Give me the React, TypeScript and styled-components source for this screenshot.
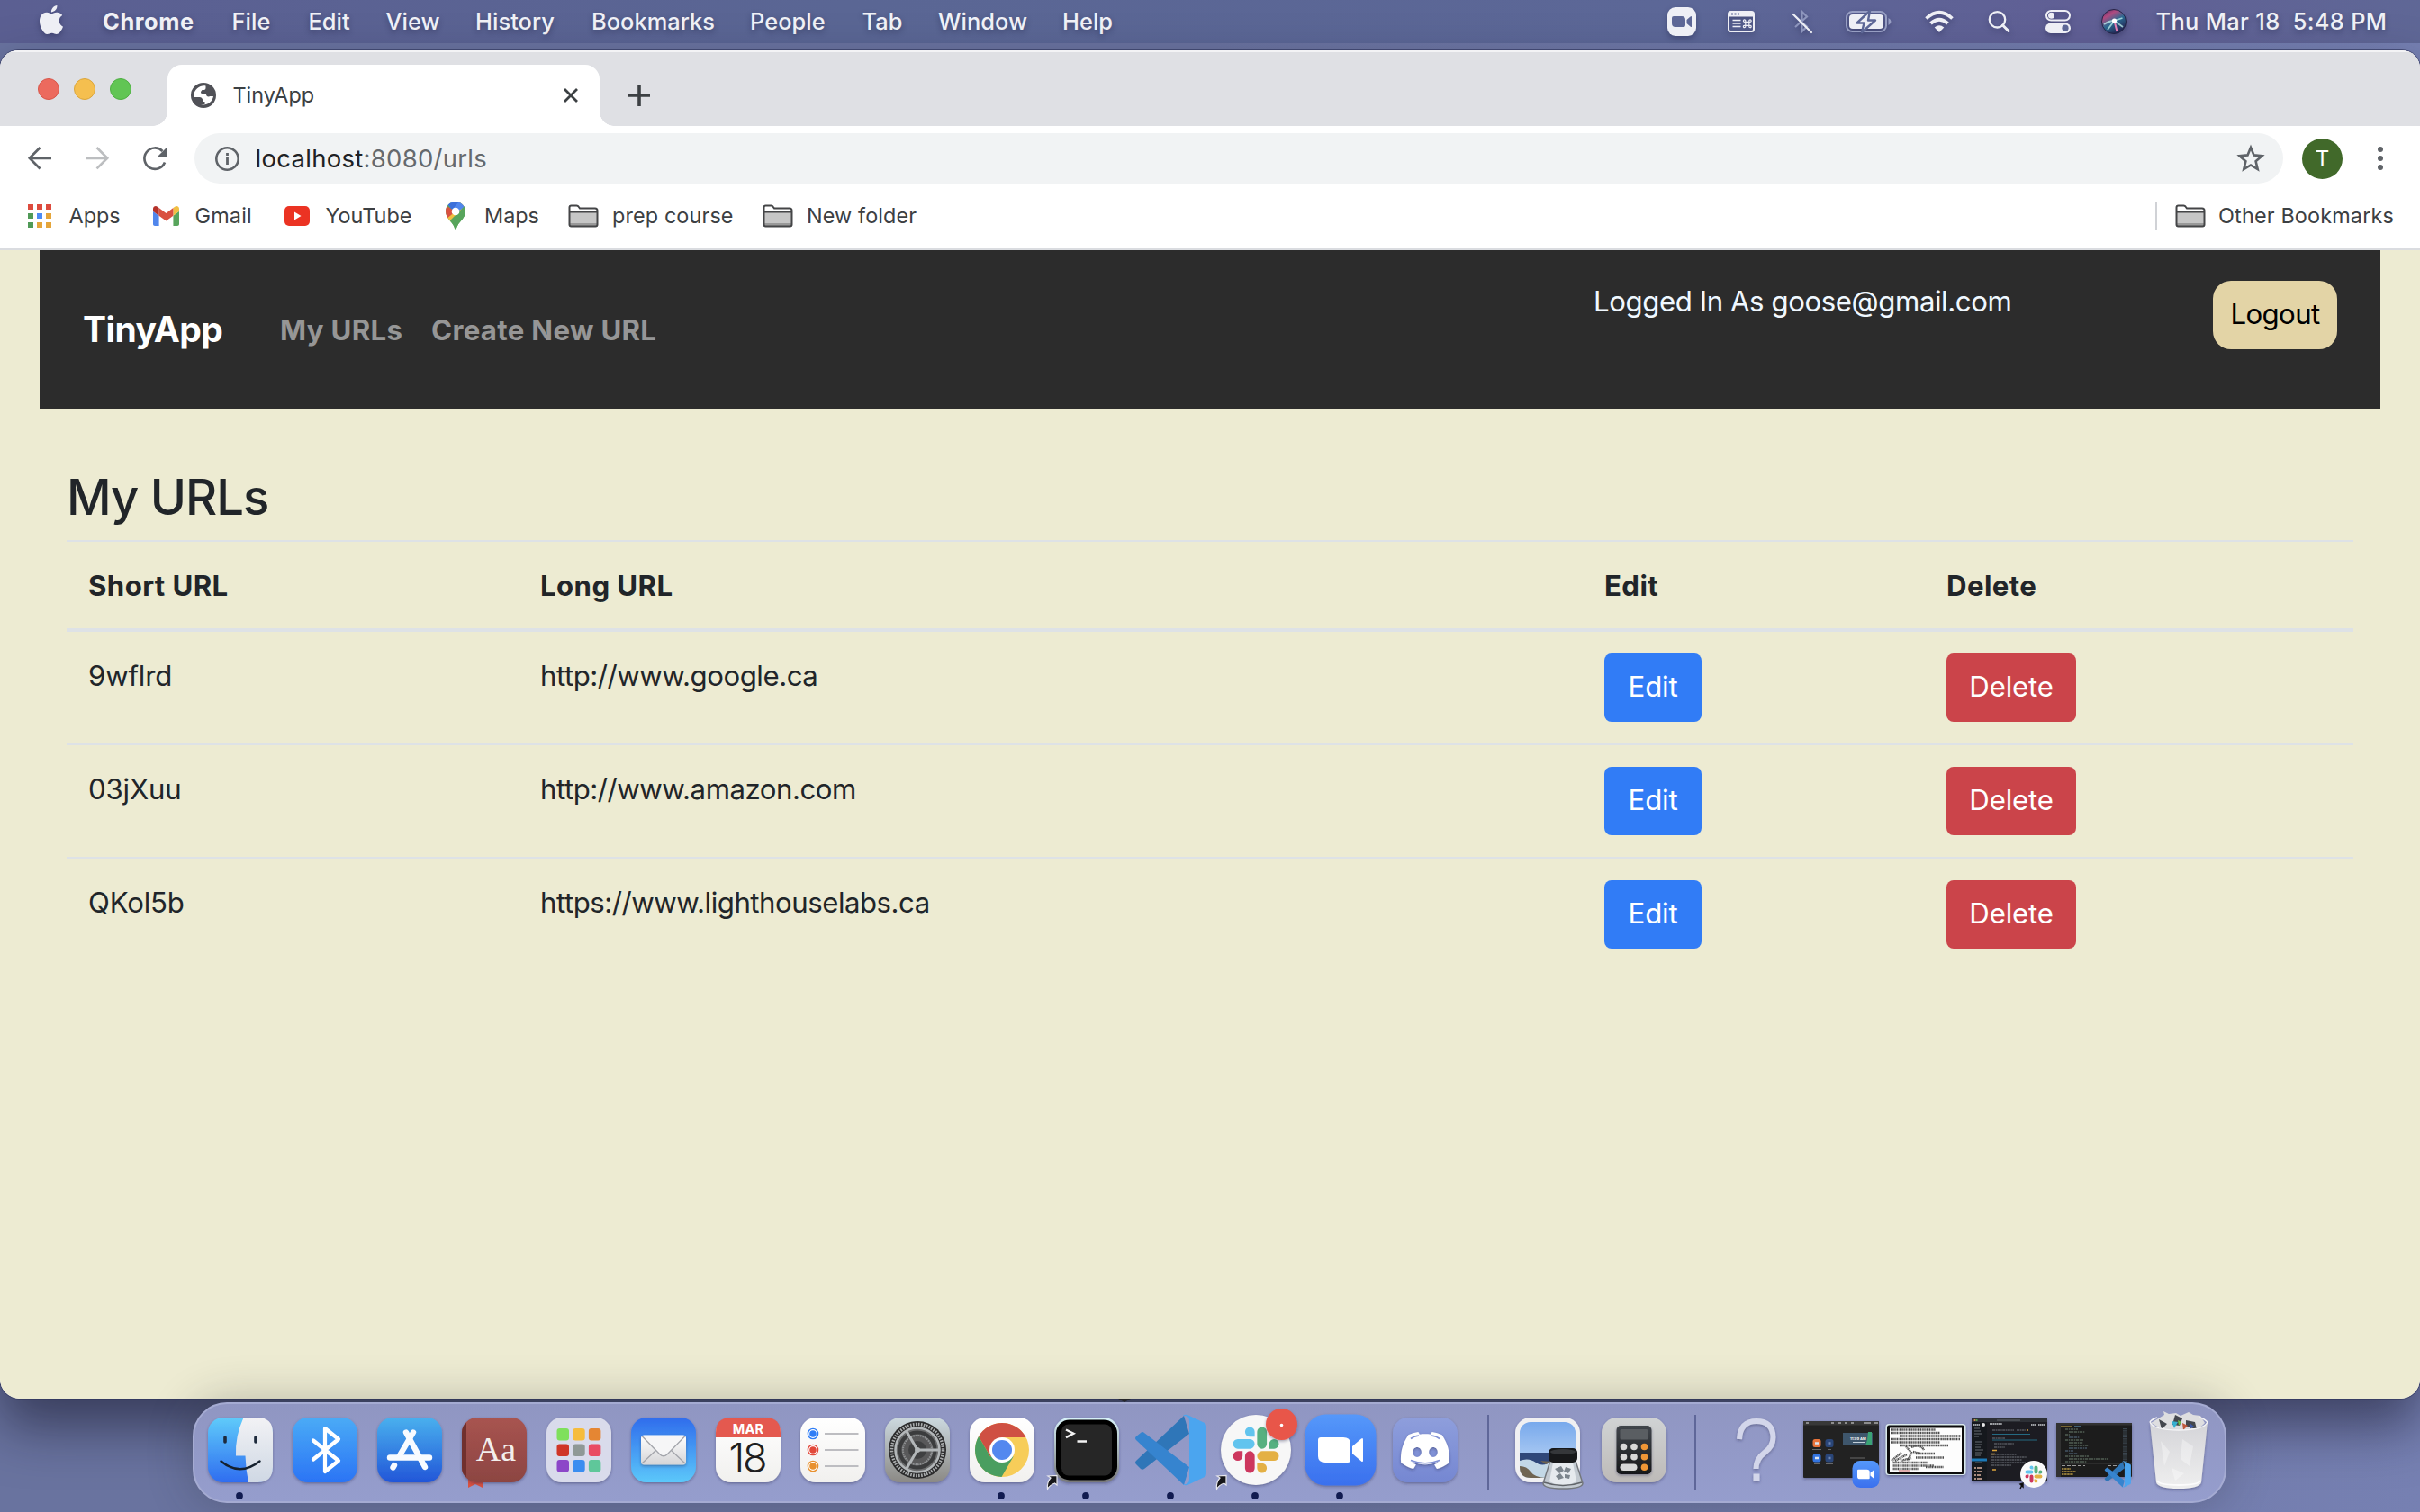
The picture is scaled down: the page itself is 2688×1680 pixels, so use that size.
import React from "react";
import styled, { createGlobalStyle } from "styled-components";
import { SiApple, SiDiscord } from "react-icons/si";

const GlobalStyle = createGlobalStyle`
  *, *::before, *::after { box-sizing: border-box; }
  html, body { margin: 0; padding: 0; }
  body {
    font-family: Inter, "Liberation Sans", sans-serif;
    -webkit-font-smoothing: antialiased;
    overflow: hidden;
  }
  svg { display: block; flex: none; overflow: visible; }
`;

/* ---------- desktop ---------- */

const Desktop = styled.div`
  width: 2688px;
  height: 1680px;
  display: flex;
  flex-direction: column;
  overflow: hidden;
  background: linear-gradient(90deg, #69739f 0%, #6a739f 50%, #7680b2 100%);
`;

const MenuBar = styled.header`
  height: 48px;
  flex: none;
  display: flex;
  align-items: center;
  color: #f1f2f7;
  font-size: 25.4px;
  line-height: 48px;
  white-space: pre;
  padding: 0 0 0 41px;
  background: linear-gradient(90deg, #5b5f92 0%, #5a6694 35%, #5c6797 70%, #605f95 86%, #5f6796 100%);
  text-shadow: 0 3px 6px rgba(20, 24, 60, 0.4);

  svg { filter: drop-shadow(0 3px 3px rgba(20, 24, 60, 0.35)); }
`;

const AppleSlot = styled.div`
  width: 73px;
  height: 48px;
  padding-top: 6px;
`;

const MenuItem = styled.span<{ $width: number; $bold?: boolean }>`
  width: ${(p) => p.$width}px;
  flex: none;
  font-weight: ${(p) => (p.$bold ? 700 : 500)};
  letter-spacing: ${(p) => (p.$bold ? 0.6 : 0.05)}px;
`;

const StatusItems = styled.div`
  display: flex;
  align-items: center;
  margin-left: 611.5px;
`;

const StatusSlot = styled.div<{ $gap?: number }>`
  margin-left: ${(p) => p.$gap ?? 0}px;
`;

const Clock = styled.span`
  margin-left: 33px;
  font-weight: 500;
  line-height: 46px;
  letter-spacing: 0.34px;
`;

/* ---------- browser window ---------- */

const Window = styled.main`
  margin-top: 8px;
  height: 1498px;
  flex: none;
  display: flex;
  flex-direction: column;
  border-radius: 20px 20px 22px 22px;
  overflow: hidden;
  background: #fff;
  box-shadow: 0 0 0 1px rgba(50, 55, 95, 0.7), 0 30px 60px rgba(15, 15, 35, 0.55);
`;

const TabStrip = styled.div`
  height: 84px;
  flex: none;
  display: flex;
  align-items: flex-end;
  padding-left: 42px;
  background: #dfe0e4;
  box-shadow: inset 0 2px 0 #f3f3f5;
`;

const Lights = styled.div`
  display: flex;
  gap: 16px;
  width: 144px;
  height: 53px;
`;

const Light = styled.i<{ $color: string; $edge: string }>`
  width: 24px;
  height: 24px;
  border-radius: 50%;
  background: ${(p) => p.$color};
  border: 1px solid ${(p) => p.$edge};
`;

const Tab = styled.div`
  position: relative;
  width: 480px;
  height: 68px;
  display: flex;
  align-items: center;
  padding: 0 24px 0 26px;
  border-radius: 16px 16px 0 0;
  background: #fff;
  color: #3c4043;

  &::before, &::after {
    content: "";
    position: absolute;
    bottom: 0;
    width: 16px;
    height: 16px;
  }
  &::before { left: -16px; background: radial-gradient(circle at 0 0, transparent 15.5px, #fff 16px); }
  &::after { right: -16px; background: radial-gradient(circle at 100% 0, transparent 15.5px, #fff 16px); }
`;

const TabTitle = styled.span`
  flex: 1;
  padding-left: 18.5px;
  font-size: 23.4px;
  line-height: 30px;
`;

const NewTab = styled.div`
  margin: 0 0 22px 32px;
`;

const Toolbar = styled.div`
  height: 72px;
  flex: none;
  display: flex;
  align-items: center;
  padding-left: 31px;
`;

const NavIcons = styled.div`
  width: 185px;
  display: flex;
  gap: 38px;
`;

const Omnibox = styled.div`
  width: 2320px;
  height: 56px;
  display: flex;
  align-items: center;
  padding: 0 21px 0 22px;
  border-radius: 28px;
  background: #f1f3f4;
`;

const Address = styled.span`
  flex: 1;
  padding-left: 17.5px;
  font-size: 27.5px;
  letter-spacing: 0.28px;
  color: #65696d;
  b { font-weight: 400; color: #202124; }
`;

const Avatar = styled.div`
  width: 45px;
  height: 45px;
  margin: 0 35px 0 21px;
  border-radius: 50%;
  background: #41692a;
  color: #fff;
  font-size: 24px;
  line-height: 45px;
  text-align: center;
`;

const Bookmarks = styled.div`
  height: 66px;
  flex: none;
  display: flex;
  align-items: flex-start;
  padding: 12px 0 0 31px;
  border-bottom: 2px solid #dadce0;
  font-size: 23.4px;
  line-height: 32px;
  color: #3c4043;
`;

const Bookmark = styled.div<{ $width?: number; $gap: number; $track?: number }>`
  height: 32px;
  display: flex;
  align-items: center;
  gap: ${(p) => p.$gap}px;
  white-space: nowrap;
  letter-spacing: ${(p) => p.$track ?? 0}px;
  ${(p) => (p.$width ? `width: ${p.$width}px;` : "")}
`;

const OtherBookmarks = styled.div`
  margin-left: auto;
  padding: 0 29px 0 20px;
  border-left: 2px solid #d0d2d6;
`;

/* ---------- page ---------- */

const Page = styled.section`
  flex: 1;
  padding: 0 44px;
  color: #212529;
  font-size: 31.2px;
  line-height: 48px;
  background: #edebd2;
`;

const Navbar = styled.nav`
  height: 176px;
  display: flex;
  align-items: flex-start;
  padding: 0 48px;
  background: #2c2c2c;
`;

const Brand = styled.span`
  width: 219px;
  padding-top: 64px;
  font-size: 39px;
  font-weight: 700;
  letter-spacing: -0.6px;
  color: #fff;
`;

const NavLink = styled.span<{ $width: number }>`
  width: ${(p) => p.$width}px;
  padding-top: 65px;
  font-weight: 700;
  letter-spacing: 0.32px;
  white-space: nowrap;
  color: #969696;
`;

const Session = styled.span`
  width: 688px;
  padding-top: 33px;
  letter-spacing: -0.42px;
  color: aliceblue;
`;

const Logout = styled.button`
  width: 138px;
  height: 76px;
  margin-top: 34px;
  padding: 0 0 3px;
  border: 0;
  border-radius: 20px;
  background: #e3d4a6;
  color: #000;
  font: inherit;
  letter-spacing: -0.6px;
`;

const Content = styled.div`
  padding: 64px 30px 0;
`;

const Title = styled.h3`
  margin: 0 0 14px;
  font-size: 54.4px;
  font-weight: 500;
  line-height: 68px;
  letter-spacing: -1px;
`;

const Table = styled.div`
  display: flex;
  flex-direction: column;
`;

const Row = styled.div`
  display: grid;
  grid-template-columns: 502px 1182px 380px 1fr;
  padding: 24px;
  border-top: 2px solid #dee2e6;
  ${Table} > &:nth-child(2) { border-top: 0; }
`;

const HeadRow = styled(Row)`
  border-bottom: 4px solid #dee2e6;
  font-weight: 700;
  letter-spacing: 0.4px;
`;

const Cell = styled.span<{ $track?: number }>`
  height: 48px;
  padding-top: 1px;
  letter-spacing: ${(p) => (p.$track === undefined ? "inherit" : `${p.$track}px`)};
`;

const Action = styled.button<{ $danger?: boolean }>`
  width: ${(p) => (p.$danger ? 144 : 108)}px;
  height: 76px;
  padding: 0 0 2px;
  border: 0;
  border-radius: 8px;
  background: ${(p) => (p.$danger ? "#cb444a" : "#317cf6")};
  color: #fff;
  font: inherit;
  letter-spacing: -0.2px;
`;

/* ---------- dock ---------- */

const Dock = styled.footer`
  width: 2259px;
  height: 112px;
  flex: none;
  display: flex;
  margin: 4px 0 0 214px;
  padding-left: 4px;
  border: 2px solid #a5abd2;
  border-radius: 38px;
  background: linear-gradient(180deg, #9096c2, #959dcd);
  box-shadow: 0 0 50px rgba(40, 42, 50, 0.3);
  z-index: 1;
`;

const DockItem = styled.div<{ $width?: number }>`
  width: ${(p) => p.$width ?? 94}px;
  height: 108px;
  flex: none;
  display: flex;
  justify-content: center;
  align-items: flex-start;
`;

const DockDivider = styled.i<{ $before: number; $after: number }>`
  width: 2px;
  height: 84px;
  flex: none;
  margin: 12px ${(p) => p.$after}px 0 ${(p) => p.$before}px;
  background: #5f6799;
`;

const Pointer = styled.i`
  position: absolute;
  left: 1242px;
  top: 1554px;
  z-index: 2;
  border: 7px solid transparent;
  border-top: 4px solid #26262b;
  border-bottom: 0;
`;

/* ---------- drawings ---------- */

const Folder = () => (
  <svg width="34" height="26" viewBox="0 0 34 26">
    <path d="M1.5 22.5V3.5q0-2 2-2h6.500q1.500 0 2 1l1.500 2h16.500q2.500 0 2.500 2.500v15.500q0 2-2 2h-27q-2 0-2-2z" fill="#fff" />
    <path d="M2 9h30v12H2z" fill="#c6c6c6" />
    <path d="M2 21h30v3H2z" fill="#999" />
    <path d="M1.500 22.500V3.500q0-2 2-2h6q1.500 0 2 1l1.500 2h17q2.500 0 2.500 2.500v15.500q0 2-2 2h-27q-2 0-2-2zM1.500 8.500h31" fill="none" stroke="#444547" strokeWidth="2" />
  </svg>
);

const MapsPin = () => (
  <svg width="22" height="32" viewBox="0 0 22 32">
    <defs>
      <clipPath id="pin">
        <path d="M11 0C4.900 0 0 4.900 0 11c0 4 2 7 5 10.500 3 3.500 4.800 6 5.300 9.500q.7 2 1.400 0c.5-3.500 2.300-6 5.300-9.500 3-3.500 5-6.500 5-10.500C22 4.900 17.100 0 11 0z" />
      </clipPath>
    </defs>
    <g clipPath="url(#pin)">
      <rect width="22" height="32" fill="#58a55c" />
      <path d="M-1 17L19-6h4v12L4 24z" fill="#f1bf42" />
      <path d="M-2 3L11 11 1 19z" fill="#d95140" />
      <path d="M2 3L12-2 24 0 22 6 11 12z" fill="#5086ec" />
      <path d="M2 3L14-1l1 1-8 9z" fill="#3c70d9" />
      <path d="M21 5l3 3v16L8 33 4 22z" fill="#58a55c" />
    </g>
    <circle cx="11" cy="11" r="4.300" fill="#fff" />
  </svg>
);

const GmailMark = () => (
  <svg width="29" height="22" viewBox="0 0 24 18">
    <path fill="#5086ec" d="M1.640 18h3.820V8.730L0 4.640v11.730C0 17.270.73 18 1.640 18z" />
    <path fill="#58a55c" d="M18.550 18h3.810c.91 0 1.640-.73 1.640-1.640V4.640l-5.450 4.090z" />
    <path fill="#f1bf42" d="M18.550 1.640v7.090L24 4.640V2.450c0-2.020-2.310-3.180-3.930-1.960z" />
    <path fill="#d95140" d="M5.450 8.730V1.640L12 6.550l6.550-4.910v7.090L12 13.640z" />
    <path fill="#b5322a" d="M0 2.450v2.190l5.450 4.090V1.640L3.930.49C2.310-.72 0 .43 0 2.450z" />
  </svg>
);

const appDots = ["#dd4b3e", "#dd4b3e", "#dd4b3e", "#509a57", "#4c8bf5", "#e5a53a", "#509a57", "#e5a53a", "#e5a53a"];

const AppsMark = () => (
  <svg width="26" height="26" viewBox="0 0 26 26">
    {appDots.map((c, i) => (
      <rect key={i} x={(i % 3) * 10} y={Math.floor(i / 3) * 10} width="6" height="6" fill={c} />
    ))}
  </svg>
);

const Globe = () => (
  <svg width="28" height="28" viewBox="0 0 28 28">
    <circle cx="14" cy="14" r="14" fill="#505157" />
    <path
      d="M16.500 3.500C10 2.500 4 7.500 3.200 13.500L3.500 16H10q2.500 0 3 2.500V21h2.500v3H11c6 2 13-2.500 14-9h-3.500q-2.500 1-4-.500l-1-2.500h-4q-2 0-1.500-2l1.500-2h2.500q1.500-.500 1.500-2z"
      fill="#fff"
    />
  </svg>
);

const ZoomCamera = ({ fill }: { fill: string }) => (
  <g fill={fill}>
    <path d="M-25-11q0-3 3-3H3q8 0 8 7v18q0 3-3 3h-25q-8 0-8-7z" />
    <path d="M13-4l10-8.500q2-1.500 2 1v23q0 2.500-2 1L13 4z" />
  </g>
);

const SlackMark = () => (
  <g>
    <path fill="#cd375e" d="M5.042 15.165a2.528 2.528 0 0 1-2.520 2.523A2.528 2.528 0 0 1 0 15.165a2.527 2.527 0 0 1 2.522-2.520h2.520v2.520zM6.313 15.165a2.527 2.527 0 0 1 2.521-2.520 2.527 2.527 0 0 1 2.521 2.520v6.313A2.528 2.528 0 0 1 8.834 24a2.528 2.528 0 0 1-2.521-2.522v-6.313z" />
    <path fill="#62c4ee" d="M8.834 5.042a2.528 2.528 0 0 1-2.521-2.520A2.528 2.528 0 0 1 8.834 0a2.528 2.528 0 0 1 2.521 2.522v2.520H8.834zM8.834 6.313a2.528 2.528 0 0 1 2.521 2.521 2.528 2.528 0 0 1-2.521 2.521H2.522A2.528 2.528 0 0 1 0 8.834a2.528 2.528 0 0 1 2.522-2.521h6.312z" />
    <path fill="#56b080" d="M18.956 8.834a2.528 2.528 0 0 1 2.522-2.521A2.528 2.528 0 0 1 24 8.834a2.528 2.528 0 0 1-2.522 2.521h-2.522V8.834zM17.688 8.834a2.528 2.528 0 0 1-2.523 2.521 2.527 2.527 0 0 1-2.520-2.521V2.522A2.527 2.527 0 0 1 15.165 0a2.528 2.528 0 0 1 2.523 2.522v6.312z" />
    <path fill="#e4b044" d="M15.165 18.956a2.528 2.528 0 0 1 2.523 2.522A2.528 2.528 0 0 1 15.165 24a2.527 2.527 0 0 1-2.520-2.522v-2.522h2.520zM15.165 17.688a2.527 2.527 0 0 1-2.520-2.523 2.526 2.526 0 0 1 2.520-2.520h6.313A2.527 2.527 0 0 1 24 15.165a2.528 2.528 0 0 1-2.522 2.523h-6.313z" />
  </g>
);

const CodeMark = () => (
  <g>
    <path d="M14-38L-39 12q-2 2 0 4l5 5q2 1.500 4 0L20-18z" fill="#2f76b8" />
    <path d="M-34-19l-5 4q-2 2 0 4L14 39l6-20-50-38q-2-2-4 0z" fill="#3684cf" />
    <path d="M18-39l19 9q2 1 2 4v52q0 3-2 4l-19 9q-3 1-5-1 7 1 7-6v-64q0-7-7-6 2-2 5-1z" fill="#4ba5ef" />
  </g>
);

const Vertical = ({ id, from, to }: { id: string; from: string; to: string }) => (
  <linearGradient id={id} x1="0" y1="0" x2="0" y2="1">
    <stop offset="0" stopColor={from} />
    <stop offset="1" stopColor={to} />
  </linearGradient>
);

const Defs = () => (
  <svg width="0" height="0">
    <defs>
      <Vertical id="finder" from="#5fcbfa" to="#2f6df0" />
      <Vertical id="finderFace" from="#f2f2f5" to="#cfd8e4" />
      <Vertical id="blue" from="#4aabf6" to="#2b74f5" />
      <Vertical id="store" from="#49b0ee" to="#2256d8" />
      <Vertical id="book" from="#a85450" to="#8c4542" />
      <Vertical id="mail" from="#2f6cec" to="#5cc8fa" />
      <Vertical id="paper" from="#ffffff" to="#f1f0ee" />
      <Vertical id="envelope" from="#ffffff" to="#d5d5d7" />
      <Vertical id="steel" from="#ccd9df" to="#8b8985" />
      <Vertical id="termRim" from="#d8f3fa" to="#777" />
      <Vertical id="zoomBg" from="#5598fa" to="#3a70ee" />
      <Vertical id="discordBg" from="#8e9edc" to="#7587d2" />
      <Vertical id="calcBg" from="#d0d3d4" to="#bdbab8" />
      <Vertical id="calcBody" from="#41464c" to="#17181a" />
      <Vertical id="sky" from="#78a9ec" to="#c5dbf6" />
      <Vertical id="trash" from="#d4d4d8" to="#efefef" />
      <filter id="drop" x="-30%" y="-30%" width="160%" height="160%">
        <feDropShadow dx="0" dy="1.500" stdDeviation="1.500" floodColor="#20244a" floodOpacity="0.4" />
      </filter>
    </defs>
  </svg>
);

const Tile = ({ fill }: { fill: string }) => (
  <rect x="-36" y="-36" width="72" height="72" rx="17" fill={fill} filter="url(#drop)" />
);

const ShortcutArrow = () => (
  <path d="M-43.500 43.500q-1-7.500 3.500-12.500l-3-2 10-.5v10.500l-2.500-2q-5.500 2-8 6.500z" fill="#151518" stroke="#e8e8ee" strokeWidth="1.200" />
);

const DockIcon = ({ width, running, children }: { width?: number; running?: boolean; children: React.ReactNode }) => (
  <DockItem $width={width}>
    <svg width="94" height="108" viewBox="-47 -51 94 108">
      {children}
      {running && <circle cx="-1" cy="51" r="3.900" fill="#111b50" />}
    </svg>
  </DockItem>
);

const Finder = () => (
  <g>
    <Tile fill="url(#finder)" />
    <path d="M3.500-36H19q17 0 17 17v38q0 17-17 17H9Q6 22 5.500 6.500H-5Q-6-15 3.500-36z" fill="url(#finderFace)" />
    <path d="M-17-14v5M17-14v5" stroke="#1d2a3c" strokeWidth="3.600" strokeLinecap="round" />
    <path d="M-21.500 12.500q21 17.500 43 0" fill="none" stroke="#14202e" strokeWidth="2.400" strokeLinecap="round" />
  </g>
);

const Bluetooth = () => (
  <g>
    <Tile fill="url(#blue)" />
    <path d="M-13-10.500L15 12 0 24v-48l15 12-28 22.500" fill="none" stroke="#fff" strokeWidth="4.200" strokeLinejoin="round" strokeLinecap="round" />
  </g>
);

const AppStore = () => (
  <g>
    <Tile fill="url(#store)" />
    <g stroke="#f8fbff" strokeWidth="6.400" strokeLinecap="round">
      <path d="M-22 8.500H22" />
      <path d="M4-19.500L-11 6M-17 17l-1.500 2.500" />
      <path d="M-4-19.500L17 19" />
    </g>
  </g>
);

const Dictionary = () => (
  <g>
    <path d="M-29 30h16v12l-8-4-8 4z" fill="#d8513f" />
    <Tile fill="url(#book)" />
    <path d="M-31-30v60q-5-3-5-11v-38q0-8 5-11z" fill="#70302e" />
    <text x="2" y="12" textAnchor="middle" fontFamily="'Liberation Serif', serif" fontSize="38" fill="#f3efec">Aa</text>
  </g>
);

const padColors = ["#7fe05c", "#f6bc3c", "#e58633", "#cf3527", "#8f9896", "#e94b63", "#8c46c8", "#3a8df0", "#5fc79a"];

const Launchpad = () => (
  <g>
    <Tile fill="#d9dbeb" />
    {padColors.map((c, i) => (
      <rect key={i} x={-24.500 + (i % 3) * 17.700} y={-24 + Math.floor(i / 3) * 17.500} width="13.500" height="13.500" rx="3" fill={c} />
    ))}
  </g>
);

const Mail = () => (
  <g>
    <Tile fill="url(#mail)" />
    <g filter="url(#drop)">
      <rect x="-25" y="-16.500" width="50" height="33" rx="3.500" fill="url(#envelope)" />
      <path d="M-24 15L-8 0M24 15L8 0" stroke="#a3a5ab" strokeWidth="1.300" />
      <path d="M-24-15.500L-4 5q4 3.500 8 0l20-20.500" fill="#f6f6f7" stroke="#a3a5ab" strokeWidth="1.300" />
    </g>
  </g>
);

const Calendar = () => (
  <g>
    <Tile fill="url(#paper)" />
    <path d="M-36-14v-5q0-17 17-17h38q17 0 17 17v5z" fill="#e4594f" />
    <text x="0" y="-18.500" textAnchor="middle" fontSize="14.500" fontWeight="700" letterSpacing=".3" fill="#fff">MAR</text>
    <text x="-1" y="25" textAnchor="middle" fontSize="45" fontWeight="300" letterSpacing="-2" fill="#1f1f21">18</text>
  </g>
);

const reminderColors = ["#2f7df6", "#e2493b", "#e8912f"];

const Reminders = () => (
  <g>
    <Tile fill="url(#paper)" />
    {reminderColors.map((c, i) => (
      <g key={c} transform={`translate(0 ${-18 + i * 18})`}>
        <circle cx="-22" r="5.600" fill="#fff" stroke={c} strokeWidth="1.400" />
        <circle cx="-22" r="3.800" fill={c} />
        <path d="M-9 0h37.500" stroke="#bdbdc1" strokeWidth="1.800" />
      </g>
    ))}
  </g>
);

const Settings = () => (
  <g>
    <Tile fill="url(#steel)" />
    <circle r="32" fill="#2b2b2c" />
    <circle r="28.500" fill="none" stroke="#a9acad" strokeWidth="3.500" strokeDasharray="1.600 1.400" />
    <circle r="24.500" fill="#6c6d6e" stroke="#b3b7b9" strokeWidth="2.600" />
    <circle r="19.500" fill="none" stroke="#3b3c3d" strokeWidth="4" />
    <circle r="16" fill="#59595a" stroke="#8f9193" strokeWidth="2" strokeDasharray="1.400 1.200" />
    <circle r="10" fill="#3f4041" />
    <path d="M0 0h25M0 0l-12.500-21.500M0 0l-12.500 21.500" stroke="#b3b7b9" strokeWidth="3" />
    <circle r="3" fill="#b3b7b9" />
  </g>
);

const Chrome = () => (
  <g>
    <Tile fill="url(#paper)" />
    <circle r="30" fill="#f7cd59" />
    <path d="M0-30A30 30 0 0 0-26-15L-13 7.500 0 0V-14H26.500A30 30 0 0 0 0-30z" fill="#cf5043" />
    <path d="M-26-15A30 30 0 0 0-.5 30L12.500 7.500 0 0-13 7.500z" fill="#4a9e60" />
    <circle r="14" fill="#fff" />
    <circle r="11" fill="#5488ef" />
  </g>
);

const Terminal = () => (
  <g>
    <Tile fill="url(#termRim)" />
    <rect x="-34" y="-33.500" width="68" height="67" rx="15" fill="#000" />
    <rect x="-28" y="-28.500" width="56" height="57" rx="8" fill="#262626" />
    <path d="M-23-22.500l8.500 4.300-8.500 4.300M-10.500-9.500h10.500" fill="none" stroke="#f4f4f4" strokeWidth="2.300" />
    <ShortcutArrow />
  </g>
);

const Slack = () => (
  <g>
    <circle r="39" fill="#f7f7f7" filter="url(#drop)" />
    <g transform="translate(-25.500 -25.500) scale(2.125)"><SlackMark /></g>
    <circle cx="28.500" cy="-28.500" r="17.500" fill="#e8564a" filter="url(#drop)" />
    <circle cx="28.500" cy="-27.500" r="1.800" fill="#fff" />
    <ShortcutArrow />
  </g>
);

const Zoom = () => (
  <g>
    <rect x="-39.500" y="-39.500" width="79" height="79" rx="23" fill="url(#zoomBg)" filter="url(#drop)" />
    <ZoomCamera fill="#fff" />
  </g>
);

const Discord = () => (
  <g>
    <Tile fill="url(#discordBg)" />
    <g filter="url(#drop)" transform="translate(-27 -26.500)">
      <SiDiscord size={54} color="#fff" />
    </g>
    <path d="M-16-12.500q3-2.500 9-3.500M16-12.500q-3-2.500-9-3.500M-16 11.500q16 6.500 32 0" fill="none" stroke="#8191d5" strokeWidth="1.700" />
  </g>
);

const Preview = () => (
  <g>
    <Tile fill="#f0f0f2" />
    <rect x="-31" y="-31" width="62" height="62" rx="12" fill="url(#sky)" />
    <path d="M-31 3h62v16H-31z" fill="#2f4779" />
    <path d="M-31 12q10-4 18 2t18-2 26 2v5q0 12-12 12h-38q-12 0-12-12z" fill="#c3d8e6" />
    <path d="M-31 18q8 0 12 6t16 7h-16q-12 0-12-12zM-8 12l12 1-6 3zM4 22l14 2v6H4z" fill="#6f6451" />
    <path d="M3 12l-8 25q0 6 22 6t22-6l-8-25z" fill="#c3cad1" stroke="#74787d" strokeWidth="1.500" />
    <path d="M6 14L2 35q7 4 15 4t15-4l-4-21z" fill="#e6eaee" />
    <path d="M8 21l7-3 3 5-5 3zM20 19l6 2-3 5-5-2zM9 29l5-3 4 5-6 2zM19 27l6 1-1 4-5-1z" fill="#7c858d" />
    <path d="M-4 36q21 7 42 0" fill="none" stroke="#606469" strokeWidth="1.500" />
    <rect x="1" y="-2" width="32" height="16" rx="5" fill="#17181a" />
    <ellipse cx="17" cy="2" rx="14" ry="3" fill="#35373a" />
  </g>
);

const Calculator = () => (
  <g>
    <Tile fill="url(#calcBg)" />
    <rect x="-19.500" y="-27" width="39" height="54" rx="5" fill="url(#calcBody)" filter="url(#drop)" />
    <rect x="-15.500" y="-23" width="31" height="11.500" rx="1.500" fill="#5a5e62" />
    {[0, 1].map((r) =>
      [0, 1, 2].map((c) => (
        <circle key={`${r}${c}`} cx={-11.500 + c * 11.500} cy={-3.500 + r * 11.300} r="3.800" fill={c === 2 ? "#ef9636" : "#d8d8d8"} />
      ))
    )}
    <rect x="-15.500" y="15.500" width="19" height="7.600" rx="3.800" fill="#d8d8d8" />
    <circle cx="11.500" cy="19.300" r="3.800" fill="#ef9636" />
  </g>
);

const Question = () => (
  <g fill="none" stroke="#d3d6ea" strokeWidth="6" filter="url(#drop)">
    <path d="M-19-12Q-18-32 0-32T18.500-14Q18.500-4 9 3T-.500 21" />
    <path d="M-3.500 30.500h7" strokeWidth="8" />
  </g>
);

const ZoomThumb = () => (
  <g>
    <rect x="-42" y="-32" width="84" height="63" rx="1" fill="#212121" filter="url(#drop)" />
    <path d="M-42-32h84v4.500h-84z" fill="#383838" />
    <path d="M-39-30h3M-11-30h3M-3-30h3M4-30h3M11-30h3M25-30h8M37-30h4" stroke="#a9a9a9" strokeWidth="1.500" />
    <rect x="2" y="-19" width="33" height="14" fill="#3e566c" />
    <text x="10" y="-11.500" fontSize="4" fontWeight="700" fill="#fff">11:09 AM</text>
    <path d="M13-8.500h13" stroke="#c4d0da" strokeWidth="1" />
    <path d="M30-20h4v15h-7l2-6z" fill="#3ba376" />
    <rect x="-31.500" y="-12" width="9" height="9" rx="2.500" fill="#e8733a" />
    <rect x="-17.500" y="-12" width="9" height="9" rx="2.500" fill="#2a4679" />
    <rect x="-31.500" y="4.500" width="9" height="9" rx="2.500" fill="#3374e0" />
    <rect x="-17.500" y="4.500" width="9" height="9" rx="2.500" fill="#2a4679" />
    <path d="M-29-7.500h4M-29 9h4" stroke="#dbe3f0" strokeWidth="2.500" />
    <path d="M-14.500-7.500h3M-14.500 9h3" stroke="#6d86b3" strokeWidth="2.500" />
    <path d="M-32-.500h10M-15-.500h4M-30 15.500h6M-17 15.500h8M10 9h17" stroke="#686868" strokeWidth="1" />
    <g transform="translate(27.500 27)">
      <rect x="-15" y="-15" width="30" height="30" rx="8.500" fill="url(#zoomBg)" />
      <g transform="scale(.38)"><ZoomCamera fill="#fff" /></g>
    </g>
  </g>
);

const TerminalThumb = () => (
  <g>
    <rect x="-44.500" y="-29" width="89" height="57" rx="3.500" fill="#d9e9ec" filter="url(#drop)" />
    <rect x="-43" y="-27.500" width="86" height="54.500" rx="2.500" fill="#0c0c0c" />
    <rect x="-40" y="-24.500" width="80" height="49.500" fill="#fdfdfd" />
    <g fill="none" stroke="#4a4a4a" strokeWidth="2.400" strokeDasharray="1.400 .6 .8 .5">
      <path d="M-39-22.500h50M-39-19h55M-29-15.500h68M-39-12h77M-39-8.500h55M-29-5h54" />
      <path d="M-11 4h21M-11 8.500h31M-38 14h41M-38 17.500h47M-38 21h30M0 19h20" />
      <path d="M-22-4l6 7-4 9M-16-3q10-4 14 3M-14 2l8 2M-38 12l11-9M-34 12l13-7M-28 12l12-3" />
    </g>
    <path d="M-30 23h12" stroke="#d99" strokeWidth="1.500" />
  </g>
);

const SlackThumb = () => (
  <g>
    <rect x="-42" y="-35" width="84" height="70" rx="1" fill="#1b1e23" filter="url(#drop)" />
    <path d="M-42-35h84v4h-84z" fill="#2d3036" />
    <rect x="-42" y="-31" width="17" height="66" fill="#15181d" />
    <g strokeWidth="1.500">
      <path d="M-41-33h1.500" stroke="#ed6a5e" /><path d="M-39-33h1.500" stroke="#f4bf4f" /><path d="M-37-33h1.500" stroke="#61c554" />
      <path d="M-14-33h26" stroke="#52565c" />
    </g>
    <circle cx="-29" cy="-28" r="2" fill="#e6e6e6" />
    <path d="M-40-28h7M-22-29h14M24-28h6M32-28h7" stroke="#c8cbd0" strokeWidth="1.500" strokeDasharray="1.500 .4" />
    <path d="M-39-24h6M-39-21h7M-39-18h9M-39-15h5M-38-9h7M-38-6h8M-38-3h6M-38 0h9M-38 3h8M-38 6h6M-38 14h8" stroke="#666b73" strokeWidth="1" />
    <path d="M-42 11h17" stroke="#1c79b8" strokeWidth="3" />
    <path d="M-39 20h8M-39 24h9M-39 28h7M-39 32h9" stroke="#a88a7e" strokeWidth="1.800" strokeDasharray="2 1 5 0" />
    <path d="M-19-22h24M8-22h10M-19-13h14M-17-7h22M-17-3h12M-20 5h28M-20 8h40M-20 11h34M-20 14h38M-20 17h22" stroke="#70757c" strokeWidth="1.100" strokeDasharray="3 .6 1.500 .5" />
    <path d="M-19-17.500h42M-19-11h50" stroke="#246a82" strokeWidth="1.100" />
    <path d="M-19 .500h5M-20 4.500h4M-19 22h4M19-22h2" stroke="#d9a33c" strokeWidth="1.500" />
    <g transform="translate(27 27)">
      <circle r="15" fill="#fafafa" />
      <g transform="translate(-9.500 -9.500) scale(.79)"><SlackMark /></g>
    </g>
    <path d="M12 43l2-4M12 38l3-1v4z" stroke="#111" strokeWidth="1.500" />
  </g>
);

const CodeThumb = () => (
  <g>
    <rect x="-42" y="-30" width="84" height="60" rx="1" fill="#1f1f1f" filter="url(#drop)" />
    <path d="M-42-30h84v2.500h-84zM-42-27.500h5V30h-5z" fill="#323232" />
    <path d="M-37-26h12" stroke="#b99a45" strokeWidth="1.200" /><path d="M-22-26h8" stroke="#5d93b5" strokeWidth="1.200" />
    <g strokeWidth="1.100" strokeDasharray="3 .8 1.500 .7">
      <path d="M-32-23h14M-28-20h18M-32-17h5M-32-11h20M-28-8h16M-28-5h22M-32 7h26M-28 10h44M-32 13h24" stroke="#6a7f6e" />
      <path d="M-28-14h12M-28-2h20M-32 1h9M-28 4h10" stroke="#597086" />
    </g>
    <path d="M34-24v40" stroke="#3b464f" strokeWidth="4" strokeDasharray="1 .8" />
    <path d="M-37 15h79" stroke="#3d3d3d" strokeWidth="1" />
    <path d="M-36 17.500h26M15 17.500h10" stroke="#9a9a9a" strokeWidth="1" strokeDasharray="4 2" />
    <path d="M-36 21h10M-36 24h16M-36 27h13" stroke="#b59642" strokeWidth="1.300" strokeDasharray="2.500 .6" />
    <g transform="translate(26.500 27) scale(.37)"><CodeMark /></g>
  </g>
);

const Trash = () => (
  <g>
    <path d="M-31-30L-16-39l-1-4 6 3 8-1 5 3 9-4 5 3 8 1 5 8-8 8h-38z" fill="#dedee0" />
    <path d="M-22-34l9 5-6 6zM-4-39l8 4-3 8-8-1zM8-33l10 2 2 8-12-3z" fill="#44474e" />
    <path d="M-8-32l7 1-4 7z" fill="#36b0d0" /><path d="M-1-33l4 2-3 4z" fill="#6bc04b" />
    <path d="M4-30l6 3-5 5z" fill="#c0583a" /><path d="M12-30l5 4-5 3z" fill="#3b57a5" />
    <path d="M-32-31q4 9 32 9t32-9l-7 67q-2 7-25 7t-25-7z" fill="url(#trash)" filter="url(#drop)" />
    <path d="M-32-31q4 9 32 9t32-9q-5-5-10-5M-32-31q2-3 8-5" fill="none" stroke="#f4f4f6" strokeWidth="1.500" />
    <path d="M-20-10l10 12-6 16zM4-12l12 8-4 22-10-8zM-8 20l14 6-10 8z" fill="#fff" opacity=".35" />
    <path d="M-24 34q2 5 24 5t24-5" fill="none" stroke="#fff" strokeWidth="2" opacity=".8" />
  </g>
);

/* ---------- menu bar status icons ---------- */

const light = "#eeeff5";

const StatusIcons = () => (
  <>
    <StatusSlot>
      <svg width="32" height="32" viewBox="0 0 32 32">
        <rect width="32" height="32" rx="9" fill={light} />
        <path d="M5 12q0-2 2-2h9q4 0 4 4v6q0 2-2 2h-9q-4 0-4-4zM21.500 14l4-3.500q1.500-1 1.500 0v11q0 1-1.500 0l-4-3.500z" fill="#5d6796" />
      </svg>
    </StatusSlot>
    <StatusSlot $gap={35}>
      <svg width="30" height="24" viewBox="0 0 30 24">
        <rect x="1" y="1" width="28" height="22" rx="2.500" fill="none" stroke={light} strokeWidth="2" />
        <path d="M1 1h28v5.500H1z" fill={light} />
        <path d="M4 3.500h2M7.500 3.500h2M11 3.500h2" stroke="#5d6796" strokeWidth="2" />
        <path d="M5.500 10.500h9M5.500 14h9M5.500 17.500h9" stroke={light} strokeWidth="1.600" />
        <path d="M19.800 12.300h4v4h-4zM19.800 12.300h-1a1.200 1.200 0 1 1 1-1.200zM23.800 12.300h1a1.200 1.200 0 1 0-1-1.200zM19.800 16.300h-1a1.200 1.200 0 1 0 1 1.200zM23.800 16.300h1a1.200 1.200 0 1 1-1 1.200z" fill="none" stroke={light} strokeWidth="1.200" />
      </svg>
    </StatusSlot>
    <StatusSlot $gap={42}>
      <svg width="22" height="26" viewBox="0 0 22 26">
        <path d="M3 7l13 11.500-5.500 5.500V2L16 7.500 3 19" fill="none" stroke="#8e96bd" strokeWidth="2.200" />
        <path d="M1 5l20 20" stroke={light} strokeWidth="2.200" strokeLinecap="round" />
      </svg>
    </StatusSlot>
    <StatusSlot $gap={37}>
      <svg width="51" height="24" viewBox="0 0 51 24">
        <rect x="1" y="1" width="44" height="22" rx="6.500" fill="none" stroke="#979ec3" strokeWidth="2" />
        <path d="M47.500 8q3 1.500 3 4t-3 4z" fill="#979ec3" />
        <rect x="4" y="4" width="38" height="16" rx="4" fill={light} />
        <path d="M27 0L12.500 13.500h8L18 24l15-13.500h-8z" fill={light} stroke="#5d6796" strokeWidth="2.400" strokeLinejoin="round" />
      </svg>
    </StatusSlot>
    <StatusSlot $gap={37}>
      <svg width="32" height="24" viewBox="0 0 32 24">
        <path d="M1.500 8.500q14.500-13.500 29 0M6.500 14q9.500-8.500 19 0" fill="none" stroke={light} strokeWidth="3.700" />
        <path d="M10.700 18.500q5.300-4.500 10.600 0L16 24z" fill={light} />
      </svg>
    </StatusSlot>
    <StatusSlot $gap={38}>
      <svg width="25" height="24" viewBox="0 0 25 24">
        <circle cx="10.500" cy="9.800" r="8.700" fill="none" stroke={light} strokeWidth="2.300" />
        <path d="M16.500 16l6.500 6.500" stroke={light} strokeWidth="3" strokeLinecap="round" />
      </svg>
    </StatusSlot>
    <StatusSlot $gap={39}>
      <svg width="28" height="26" viewBox="0 0 28 26">
        <rect x="1" y="1" width="26" height="10.500" rx="5.200" fill="none" stroke={light} strokeWidth="2" />
        <circle cx="6.500" cy="6.200" r="3.500" fill={light} />
        <rect y="14.500" width="28" height="11.500" rx="5.700" fill={light} />
        <circle cx="22" cy="20.200" r="3.600" fill="#5d6796" />
      </svg>
    </StatusSlot>
    <StatusSlot $gap={34}>
      <svg width="28" height="28" viewBox="0 0 28 28">
        <defs>
          <linearGradient id="siri" x1="0" y1="0" x2=".6" y2="1">
            <stop offset="0" stopColor="#4a2560" />
            <stop offset=".3" stopColor="#b04a80" />
            <stop offset=".6" stopColor="#2b6a92" />
            <stop offset="1" stopColor="#232452" />
          </linearGradient>
        </defs>
        <circle cx="14" cy="14" r="13.500" fill="url(#siri)" stroke="#232547" />
        <path d="M14.500 13Q9 13 3 17M14.500 13l9-3M14.500 13l9.500 7M14.500 13L7 23" stroke="#bff2ee" strokeWidth="1.800" fill="none" opacity=".75" />
        <path d="M14.500 13l3 12" stroke="#e77fb4" strokeWidth="2" />
        <circle cx="14.500" cy="13" r="2.600" fill="#fff" />
      </svg>
    </StatusSlot>
  </>
);

/* ---------- data ---------- */

const urls = [
  { short: "9wflrd", long: "http://www.google.ca" },
  { short: "03jXuu", long: "http://www.amazon.com" },
  { short: "QKol5b", long: "https://www.lighthouselabs.ca" },
];

const menus: [string, number][] = [
  ["File", 85],
  ["Edit", 86],
  ["View", 99.5],
  ["History", 129],
  ["Bookmarks", 176],
  ["People", 124.5],
  ["Tab", 84.5],
  ["Window", 138],
  ["Help", 60],
];

export default function App() {
  return (
    <Desktop>
      <GlobalStyle />
      <MenuBar>
        <AppleSlot><SiApple size={32} color="#eeeff5" /></AppleSlot>
        <MenuItem $width={143.5} $bold>Chrome</MenuItem>
        {menus.map(([label, width]) => (
          <MenuItem key={label} $width={width}>{label}</MenuItem>
        ))}
        <StatusItems>
          <StatusIcons />
          <Clock>Thu Mar 18  5:48 PM</Clock>
        </StatusItems>
      </MenuBar>

      <Window>
        <TabStrip>
          <Lights>
            <Light $color="#ec6a5e" $edge="#d8574b" />
            <Light $color="#f5bf4f" $edge="#dba63c" />
            <Light $color="#61c554" $edge="#4faf43" />
          </Lights>
          <Tab>
            <Globe />
            <TabTitle>TinyApp</TabTitle>
            <svg width="16" height="16" viewBox="0 0 16 16">
              <path d="M1 1l14 14M15 1L1 15" stroke="#3c4043" strokeWidth="2.800" />
            </svg>
          </Tab>
          <NewTab>
            <svg width="24" height="24" viewBox="0 0 24 24">
              <path d="M12 0v24M0 12h24" stroke="#3c4043" strokeWidth="3.600" />
            </svg>
          </NewTab>
        </TabStrip>

        <Toolbar>
          <NavIcons>
            <svg width="26" height="26" viewBox="0 0 26 26">
              <path d="M26 12.800H2M13.500 1L1.800 12.800l11.700 11.700" fill="none" stroke="#5f6368" strokeWidth="2.700" />
            </svg>
            <svg width="26" height="26" viewBox="0 0 26 26">
              <path d="M0 12.800h24M12.500 1l11.700 11.700-11.700 11.700" fill="none" stroke="#bcbec0" strokeWidth="2.700" />
            </svg>
            <svg width="27" height="26" viewBox="0 0 27 26">
              <path d="M24 17.500A11.700 11.700 0 1 1 21.500 5" fill="none" stroke="#5f6368" strokeWidth="2.700" />
              <path d="M27 0v11H16z" fill="#5f6368" />
            </svg>
          </NavIcons>
          <Omnibox>
            <svg width="28" height="28" viewBox="0 0 28 28">
              <circle cx="14.500" cy="14.500" r="12.200" fill="none" stroke="#5f6368" strokeWidth="2.600" />
              <path d="M14.500 13v8M14.500 8v3" stroke="#5f6368" strokeWidth="2.800" />
            </svg>
            <Address><b>localhost</b>:8080/urls</Address>
            <svg width="30" height="30" viewBox="0 0 30 30">
              <path d="M15 3l3.500 8.400 9 .8-6.900 6 2.100 8.900-7.700-4.700-7.700 4.700 2.100-8.900-6.900-6 9-.8z" fill="none" stroke="#5f6368" strokeWidth="2.600" />
            </svg>
          </Omnibox>
          <Avatar>T</Avatar>
          <svg width="14" height="28" viewBox="0 0 14 28">
            <g fill="#5f6368">
              <circle cx="7" cy="4" r="3" /><circle cx="7" cy="14" r="3" /><circle cx="7" cy="24" r="3" />
            </g>
          </svg>
        </Toolbar>

        <Bookmarks>
          <Bookmark $width={139} $gap={19.5}><AppsMark />Apps</Bookmark>
          <Bookmark $width={145.5} $gap={17.5} $track={0.2}><GmailMark />Gmail</Bookmark>
          <Bookmark $width={179.5} $gap={18}>
            <svg width="28" height="22" viewBox="0 0 28 22">
              <rect width="28" height="22" rx="5" fill="#eb3323" />
              <path d="M11 6.500l7.500 4.500-7.500 4.500z" fill="#fff" />
            </svg>
            YouTube
          </Bookmark>
          <Bookmark $width={136} $gap={21}><MapsPin />Maps</Bookmark>
          <Bookmark $width={216} $gap={15} $track={0.12}><Folder />prep course</Bookmark>
          <Bookmark $gap={15} $track={0.12}><Folder />New folder</Bookmark>
          <OtherBookmarks>
            <Bookmark $gap={14} $track={0.16}><Folder />Other Bookmarks</Bookmark>
          </OtherBookmarks>
        </Bookmarks>

        <Page>
          <Navbar>
            <Brand>TinyApp</Brand>
            <NavLink $width={168}>My URLs</NavLink>
            <NavLink $width={1291}>Create New URL</NavLink>
            <Session>Logged In As goose@gmail.com</Session>
            <Logout>Logout</Logout>
          </Navbar>
          <Content>
            <Title>My URLs</Title>
            <Table>
              <HeadRow>
                <Cell>Short URL</Cell>
                <Cell>Long URL</Cell>
                <Cell>Edit</Cell>
                <Cell>Delete</Cell>
              </HeadRow>
              {urls.map((u) => (
                <Row key={u.short}>
                  <Cell $track={-0.2}>{u.short}</Cell>
                  <Cell $track={-0.48}>{u.long}</Cell>
                  <Action>Edit</Action>
                  <Action $danger>Delete</Action>
                </Row>
              ))}
            </Table>
          </Content>
        </Page>
      </Window>

      <Pointer />
      <Dock>
        <DockIcon running><Finder /></DockIcon>
        <DockIcon><Bluetooth /></DockIcon>
        <DockIcon><AppStore /></DockIcon>
        <DockIcon><Dictionary /></DockIcon>
        <DockIcon><Launchpad /></DockIcon>
        <DockIcon><Mail /></DockIcon>
        <DockIcon><Calendar /></DockIcon>
        <DockIcon><Reminders /></DockIcon>
        <DockIcon><Settings /></DockIcon>
        <DockIcon running><Chrome /></DockIcon>
        <DockIcon running><Terminal /></DockIcon>
        <DockIcon running><CodeMark /></DockIcon>
        <DockIcon running><Slack /></DockIcon>
        <DockIcon running><Zoom /></DockIcon>
        <DockIcon><Discord /></DockIcon>
        <DockDivider $before={22} $after={17} />
        <DockIcon width={96}><Preview /></DockIcon>
        <DockIcon width={96}><Calculator /></DockIcon>
        <DockDivider $before={19} $after={19} />
        <DockIcon width={95}><Question /></DockIcon>
        <DockIcon width={93.700}><ZoomThumb /></DockIcon>
        <DockIcon width={93.700}><TerminalThumb /></DockIcon>
        <DockIcon width={93.700}><SlackThumb /></DockIcon>
        <DockIcon width={93.700}><CodeThumb /></DockIcon>
        <DockIcon width={93.700}><Trash /></DockIcon>
        <Defs />
      </Dock>
    </Desktop>
  );
}
